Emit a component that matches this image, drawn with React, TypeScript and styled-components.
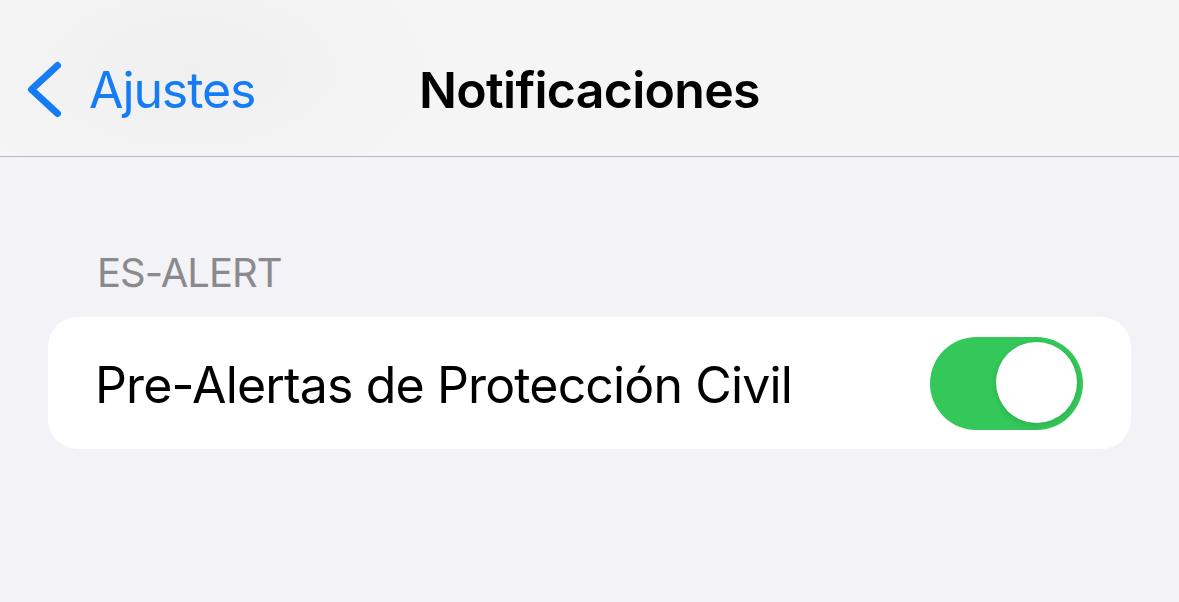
import React, { useState } from 'react';
import { styled, createGlobalStyle } from 'styled-components';

const GlobalStyle = createGlobalStyle`
  html, body {
    margin: 0;
    padding: 0;
    background: #f2f2f7;
  }
  body {
    font-family: Inter, "Noto Sans", "Liberation Sans", sans-serif;
    -webkit-font-smoothing: antialiased;
  }
`;

const Screen = styled.div`
  width: 1179px;
  height: 602px;
  overflow: hidden;
  background: #f2f2f7;
  display: flex;
  flex-direction: column;
`;

const NavBar = styled.header`
  height: 157px;
  box-sizing: border-box;
  padding-top: 60px;
  background:
    radial-gradient(ellipse 260px 140px at 190px 70px, rgba(0, 0, 0, 0.025), transparent),
    #f5f5f5;
  border-bottom: 1px solid #b9b9c1;
  flex-shrink: 0;
`;

const NavRow = styled.div`
  height: 60px;
  display: grid;
  grid-template-columns: 1fr auto 1fr;
  align-items: center;
`;

const BackButton = styled.button`
  justify-self: start;
  display: flex;
  align-items: center;
  gap: 25px;
  padding: 0 0 0 24px;
  border: none;
  background: none;
  color: #157cf6;
  font-family: inherit;
  font-size: 50px;
  line-height: 60px;
  letter-spacing: -1.1px;
  cursor: pointer;
`;

const Title = styled.h1`
  margin: 0;
  font-size: 50px;
  line-height: 60px;
  font-weight: 600;
  letter-spacing: -0.7px;
  color: #000;
`;

const Content = styled.main`
  padding: 92px 48px 0 48px;
`;

const SectionLabel = styled.div`
  padding-left: 49px;
  font-size: 40px;
  line-height: 48px;
  color: #8a8a8e;
  letter-spacing: -1px;
  margin-bottom: 20px;
`;

const Card = styled.div`
  background: #fff;
  border-radius: 30px;
  overflow: hidden;
`;

const Row = styled.div`
  height: 132px;
  box-sizing: border-box;
  display: flex;
  align-items: center;
  justify-content: space-between;
  padding: 0 48px 0 47px;
`;

const RowLabel = styled.span`
  font-size: 50px;
  line-height: 60px;
  padding-top: 3px;
  color: #000;
  letter-spacing: -0.85px;
`;

const Track = styled.button<{ $on: boolean }>`
  position: relative;
  width: 153px;
  height: 93px;
  border-radius: 47px;
  border: none;
  padding: 0;
  background: ${p => (p.$on ? '#34c759' : '#e9e9eb')};
  cursor: pointer;
  flex-shrink: 0;
`;

const Knob = styled.span<{ $on: boolean }>`
  position: absolute;
  top: 5px;
  left: ${p => (p.$on ? '66px' : '6px')};
  width: 81px;
  height: 81px;
  border-radius: 50%;
  background: #fff;
  box-shadow: 0 2px 6px rgba(0, 0, 0, 0.12);
  transition: left 0.2s ease;
`;

const Chevron = () => (
  <svg width="40" height="60" viewBox="0 0 40 60" fill="none">
    <polyline
      points="33.5,5.5 7.5,29.5 33.5,53.5"
      stroke="#157cf6"
      strokeWidth="7"
      strokeLinecap="round"
      strokeLinejoin="round"
    />
  </svg>
);

export default function App() {
  const [enabled, setEnabled] = useState(true);

  return (
    <>
      <GlobalStyle />
      <Screen>
        <NavBar>
          <NavRow>
            <BackButton>
              <Chevron />
              Ajustes
            </BackButton>
            <Title>Notificaciones</Title>
            <span />
          </NavRow>
        </NavBar>
        <Content>
          <SectionLabel>ES-ALERT</SectionLabel>
          <Card>
            <Row>
              <RowLabel>Pre-Alertas de Protección Civil</RowLabel>
              <Track $on={enabled} onClick={() => setEnabled(v => !v)} aria-pressed={enabled}>
                <Knob $on={enabled} />
              </Track>
            </Row>
          </Card>
        </Content>
      </Screen>
    </>
  );
}
